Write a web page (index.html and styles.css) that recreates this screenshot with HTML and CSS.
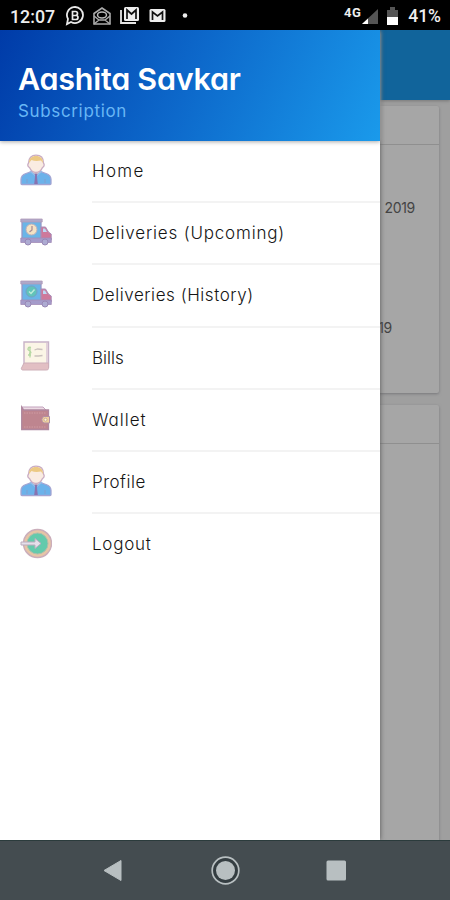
FILE: index.html
```html
<!DOCTYPE html>
<html lang="en">
<head>
<meta charset="utf-8">
<title>Subscription menu</title>
<link rel="stylesheet" href="styles.css">
</head>
<body>
<svg width="0" height="0" class="defs">
  <symbol id="person" viewBox="0 0 32 32">
    <path d="M1 29.500v-4c0-3 2-5 5-6l6-2h8l6 2c3 1 5 3 5 6v4c0 .7-.5 1-1 1H2c-.5 0-1-.3-1-1z" fill="#5baae8" stroke="#9b9bce" stroke-width="1.300"/>
    <path d="M12 15h8v3l-4 3-4-3z" fill="#f3d5c8"/>
    <path d="M10 17l6 5 6-5" fill="none" stroke="#8ab7e8" stroke-width="1.500"/>
    <path d="M14.500 19.500h3l-.6 2.500.9 8h-3.600l.9-8z" fill="#7b64a8"/>
    <path d="M8.500 9c0-5 3-7.800 7.500-7.800s7.500 2.800 7.500 7.800c1.500 2 .3 4-1 4.500C21 17 18.500 18.500 16 18.500S11 17 9.500 13.500C8 13 7 11 8.500 9z" fill="#faebdf" stroke="#c5a5bd" stroke-width="1.300"/>
    <path d="M9 9c0-5 3-7 7-7s7 2 7 7l-2-2.500c-4 .8-7 .5-9.500-.5z" fill="#ebc477"/>
    <path d="M7 25v4m18-4v4" stroke="#7994ca" stroke-width="1"/>
  </symbol>
  <symbol id="truck" viewBox="0 0 32 28">
    <path d="M2 3h19v18H2z" fill="#5aaee5" stroke="#8d8dc1" stroke-width="1.300"/>
    <path d="M.8 1h21.400v3H.8z" fill="#a5a0c4" stroke="#a991b1" stroke-width=".8"/>
    <path d="M21 9h4.500l3 5 2.700 2v6H21z" fill="#c96b91" stroke="#a184b2"/>
    <path d="M23 10.500h2l2 3.500h-4z" fill="#b5d7f4"/>
    <path d="M.8 20h30.500v4.500H.8z" fill="#9b91c5" stroke="#9b80b0" stroke-width=".8"/>
    <circle cx="8" cy="24" r="3" fill="#a5a2ce" stroke="#8d7cae"/><circle cx="25" cy="24" r="3" fill="#a5a2ce" stroke="#8d7cae"/>
  </symbol>
</svg>
<div class="phone">
  <header class="status">
    <span class="time">12:07</span>
    <svg class="notices" width="126" height="20" viewBox="0 0 126 20">
      <path d="M2 18l1-5a8 8 0 1 1 3 3z" fill="none" stroke="#e9e9e9" stroke-width="1.800"/>
      <path d="M7.500 5.500h3a2 2 0 0 1 0 4h-3zM7.500 9.500h3.500a2 2 0 0 1 0 4H7.500z" fill="none" stroke="#e9e9e9" stroke-width="1.700"/>
      <path d="M29 7.500L37 2l8 5.500V18H29z" fill="none" stroke="#aaa" stroke-width="1.600"/>
      <path d="M29 10l5 4h6l5-4M29 18l5-4m6 0l5 4" fill="none" stroke="#aaa" stroke-width="1.500"/>
      <ellipse cx="37" cy="9" rx="4.500" ry="3" fill="none" stroke="#bbb" stroke-width="1.500"/>
      <path d="M56 4v13h15" fill="none" stroke="#e5e5e5" stroke-width="1.800"/>
      <rect x="59" y="1" width="15" height="14" rx="1.500" fill="#eee"/>
      <path d="M62 13V4l4.500 4L71 4v9" fill="none" stroke="#111" stroke-width="1.700"/>
      <rect x="84.500" y="3" width="16" height="13" rx="1.500" fill="#eee"/>
      <path d="M87.500 14V6l5 4 5-4v8" fill="none" stroke="#111" stroke-width="1.700"/>
      <circle cx="120" cy="9.500" r="2.300" fill="#eee"/>
    </svg>
    <span class="network">4G</span>
    <svg class="signal" width="16" height="15" viewBox="0 0 16 15"><path d="M0 15L16 0v15z" fill="#555"/><path d="M0 15l6-5.600V15z" fill="#fff"/></svg>
    <svg class="battery" width="11" height="18" viewBox="0 0 11 18"><path d="M0 3h3V0h5v3h3v7H0z" fill="#555"/><path d="M0 10h11v8H0z" fill="#fff"/></svg>
    <span class="percent">41%</span>
  </header>
  <main class="screen">
    <div class="toolbar"></div>
    <section class="card first"><div class="card-head"></div><p class="date">2019</p><p class="date end">2019</p></section>
    <section class="card second"><div class="card-head"></div></section>
    <aside class="drawer">
      <div class="account"><h1>Aashita Savkar</h1><p>Subscription</p></div>
      <nav class="menu">
        <a class="item"><svg class="icon"><use href="#person"/></svg><span class="label home">Home</span></a>
        <a class="item"><svg class="icon" viewBox="0 0 32 32"><use href="#truck" y="2" width="32" height="28"/><circle cx="11.500" cy="13.500" r="5.500" fill="#f3dfbd" stroke="#b5a7b3"/><path d="M12 10v4l-2.500 2" fill="none" stroke="#9c7e88" stroke-width="1.200"/></svg><span class="label upcoming">Deliveries (Upcoming)</span></a>
        <a class="item"><svg class="icon" viewBox="0 0 32 32"><use href="#truck" y="2" width="32" height="28"/><circle cx="11.500" cy="13.500" r="5.500" fill="#50bdb2" stroke="#6897bd"/><path d="M9 13.500l2 2 3.500-4" fill="none" stroke="#b5ead6" stroke-width="1.500"/></svg><span class="label history">Deliveries (History)</span></a>
        <a class="item"><svg class="icon" viewBox="0 0 32 32"><path d="M4 2h24.500v25H4z" fill="#fbf4e4" stroke="#c2aac3" stroke-width="1.400"/><path d="M27 3v22" stroke="#dfcdd6" stroke-width="2"/><path d="M4 23h24.500v5.500c0 1-1 1.500-2 1.500H3c-1.500 0-2-1-1.500-2z" fill="#dfb9bd" stroke="#c9a7b2"/><path d="M11 7.500c-3-1-4 2-2 3s3 3 0 3m2 1.500H8m2-8.500v11" fill="none" stroke="#add498" stroke-width="1.300"/><path d="M14.500 10l3-1 5 .5M14.500 16h4l4-.5" fill="none" stroke="#c5bbb7" stroke-width="1.300"/></svg><span class="label bills">Bills</span></a>
        <a class="item"><svg class="icon" viewBox="0 0 32 32"><path d="M2 5h21l4 4v3H2z" fill="#ead8e2" stroke="#bd9ab7"/><path d="M1.700 5l2 3H28.500v19.500H1.700z" fill="#b87883" stroke="#a77c96" stroke-width="1.300"/><path d="M4 11h22M4 25h22" stroke="#c9929a" stroke-dasharray="1.500 1"/><path d="M29.500 14.500H24a3.500 3.500 0 0 0 0 6.500h5.500z" fill="#efcc94" stroke="#a9849c"/><circle cx="25.500" cy="17.700" r="1.500" fill="#fff3d1" stroke="#b29184" stroke-width=".7"/></svg><span class="label wallet">Wallet</span></a>
        <a class="item"><svg class="icon"><use href="#person"/></svg><span class="label profile">Profile</span></a>
        <a class="item"><svg class="icon" viewBox="0 0 32 32"><circle cx="17.500" cy="16.500" r="14" fill="#e4bf9d" stroke="#c6a6b4" stroke-width="1.500"/><circle cx="17.500" cy="16.500" r="10.500" fill="#54c5a4" stroke="#a4b7a4"/><path d="M1 15h14v-3.500l6 5-6 5V18H1z" fill="#e3dce8" stroke="#b4a4b8" stroke-width="1"/></svg><span class="label logout">Logout</span></a>
      </nav>
    </aside>
  </main>
  <footer class="navigation">
    <svg width="450" height="60" viewBox="0 0 450 60"><path d="M104 30.500L121 20.500v20z" fill="#b8bfc1" stroke="#b8bfc1" stroke-linejoin="round"/><circle cx="225.500" cy="30.500" r="13.300" fill="#343d41" stroke="#b8bfc1" stroke-width="1.700"/><circle cx="225.500" cy="30.500" r="9.500" fill="#b8bfc1"/><rect x="326.500" y="20.500" width="19.500" height="20" rx="1.500" fill="#b8bfc1"/></svg>
  </footer>
</div>
</body>
</html>
```
FILE: styles.css
```css
* { box-sizing: border-box; }
body { margin: 0; font-family: Inter, "Open Sans", sans-serif; font-feature-settings: "cv11"; }
h1, p { margin: 0; }
.defs { position: absolute; }
.phone { width: 450px; height: 900px; display: flex; flex-direction: column; overflow: hidden; }
.status { height: 30px; flex: none; background: #000; color: #eee; display: flex; align-items: center; padding: 2px 9px 0 10px; font-family: Roboto, sans-serif; font-weight: 500; }
.time { width: 55px; font-size: 17.8px; }
.network { margin-left: auto; font-size: 13px; font-weight: 700; margin-top: -8px; letter-spacing: .4px; }
.signal { margin-left: 1px; }
.battery { margin: -1px 10px 0 9px; }
.percent { font-size: 17.5px; white-space: nowrap; }
.screen { position: relative; flex: 1; background: #9f9f9f; overflow: hidden; }
.toolbar { height: 70px; background: #11649b; box-shadow: 0 1px 3px #777; }
.card { width: 428px; margin-left: 11px; background: #a6a6a6; box-shadow: 0 1px 3px #77777b; border-radius: 2px; }
.first { height: 287px; margin-top: 6px; }
.second { height: 460px; margin-top: 12px; }
.card-head { height: 39px; border-bottom: 1px solid #8f8f8f; }
.date { margin: 54px 24px 0; text-align: right; color: #444; font-size: 14px; line-height: 18px; letter-spacing: -.3px; }
.date.end { margin: 102px 47px 0; }
.drawer { position: absolute; inset: 0 auto 0 0; width: 380px; background: #fff; box-shadow: 0 0 5px #555; }
.account { position: relative; height: 111px; padding: 28px 18px 0; background: linear-gradient(115deg, #003ba8, #0d69cb 50%, #1a9aeb); box-shadow: 0 1px 4px #aaa; }
.account h1 { font-size: 30.5px; line-height: 41px; font-weight: 600; color: #fff; letter-spacing: -.25px; white-space: nowrap; }
.account p { font-size: 17px; line-height: 24px; color: #68b6f5; letter-spacing: .65px; }
.menu { display: flex; flex-direction: column; }
.item { display: flex; align-items: center; height: 62.2px; padding-left: 20px; color: #151515; }
.icon { width: 32px; height: 32px; margin: -5px 40px 0 0; flex: none; opacity: .9; }
.label { flex: 1; height: 100%; font-size: 17px; font-weight: 300; line-height: 60px; border-bottom: 2px solid #f3f3f3; white-space: nowrap; }
.home { letter-spacing: 1.3px; }
.upcoming { letter-spacing: .82px; }
.history { letter-spacing: .55px; }
.bills { letter-spacing: 0; }
.wallet { letter-spacing: 1px; }
.profile { letter-spacing: .5px; }
.logout { letter-spacing: .75px; }
.item:last-child .label { border-bottom: 0; }
.navigation { height: 60px; flex: none; background: #444c50; border-top: 1px solid #2b3b3c; }
.navigation svg { display: block; margin-top: -1px; }
```
